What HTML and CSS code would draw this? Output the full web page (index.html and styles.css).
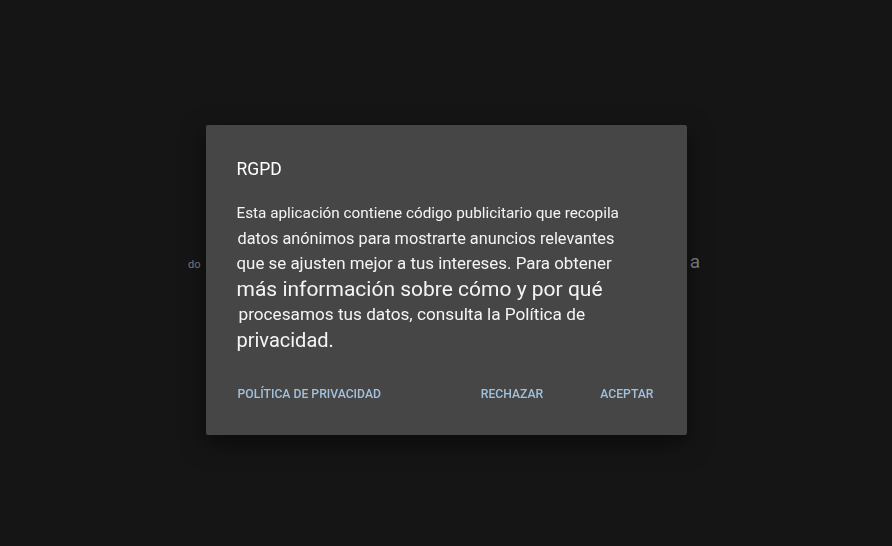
FILE: index.html
```html
<!DOCTYPE html>
<html lang="es">
<head>
    <meta charset="UTF-8">
    <meta name="viewport" content="width=device-width, initial-scale=1.0">
    <title>RGPD</title>
    <link rel="stylesheet" href="styles.css">
</head>
<body>
    <div class="page">
        <div class="bg-row">
            <span class="bg-small">do</span>
            <span class="bg-large">a</span>
        </div>
    </div>

    <div class="overlay">
        <div class="dialog">
            <h2 class="title">RGPD</h2>
            <div class="message">
                <span class="line l1">Esta aplicación contiene código publicitario que recopila</span>
                <span class="line l2">datos anónimos para mostrarte anuncios relevantes</span>
                <span class="line l3">que se ajusten mejor a tus intereses. Para obtener</span>
                <span class="line l4">más información sobre cómo y por qué</span>
                <span class="line l5">procesamos tus datos, consulta la Política de</span>
                <span class="line l6">privacidad.</span>
            </div>
            <div class="actions">
                <button class="btn">Política de privacidad</button>
                <div class="actions-right">
                    <button class="btn">Rechazar</button>
                    <button class="btn">Aceptar</button>
                </div>
            </div>
        </div>
    </div>
</body>
</html>
```

FILE: styles.css
```css
body {
    margin: 0;
    padding: 0;
    background-color: #151515;
    font-family: Roboto, "Liberation Sans", sans-serif;
    width: 892px;
    height: 546px;
    overflow: hidden;
}
.page {
    height: 546px;
}
.bg-row {
    display: flex;
    justify-content: space-between;
    align-items: baseline;
    padding: 250px 192px 0 188px;
    color: #808080;
}
.bg-small {
    font-size: 11px;
}
.bg-large {
    font-size: 19px;
}
.overlay {
    position: fixed;
    inset: 0;
    display: flex;
    justify-content: center;
    align-items: center;
    padding-top: 14px;
}
.dialog {
    width: 481px;
    height: 310px;
    box-sizing: border-box;
    background: #464646;
    border-radius: 2px;
    box-shadow: 0 8px 24px rgba(0, 0, 0, 0.5);
    padding: 32px 33px 0 31px;
}
.title {
    margin: 0 0 20px 0;
    font-size: 17.5px;
    font-weight: 400;
    color: #ffffff;
    line-height: 24px;
}
.message {
    color: #f4f4f4;
}
.line {
    display: block;
    white-space: nowrap;
    font-size: 15.3px;
    line-height: 25px;
}
.l2 {
    font-size: 16.3px;
    padding-left: 1px;
}
.l3 {
    font-size: 16.9px;
}
.l4 {
    font-size: 21px;
    line-height: 26px;
}
.l5 {
    font-size: 17.2px;
    padding-left: 2px;
}
.l6 {
    font-size: 20px;
    line-height: 26px;
}
.actions {
    display: flex;
    justify-content: space-between;
    align-items: center;
    margin-top: 34px;
    padding-left: 1px;
}
.actions-right {
    display: flex;
    gap: 57px;
}
.btn {
    background: none;
    border: none;
    padding: 0;
    font-family: inherit;
    font-size: 12.2px;
    font-weight: 500;
    text-transform: uppercase;
    color: #a3c0db;
    cursor: pointer;
}
```
